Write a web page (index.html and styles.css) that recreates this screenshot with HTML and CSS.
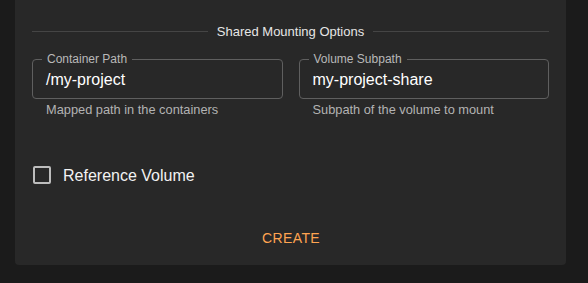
FILE: index.html
```html
<!DOCTYPE html>
<html>
<head>
<meta charset="utf-8">
<link rel="stylesheet" href="styles.css">
</head>
<body>
<div class="card">
  <div class="divider"><span class="divider-text">Shared Mounting Options</span></div>
  <div class="fields">
    <div class="field">
      <div class="outline">
        <span class="label">Container Path</span>
        <span class="value">/my-project</span>
      </div>
      <div class="helper">Mapped path in the containers</div>
    </div>
    <div class="field">
      <div class="outline">
        <span class="label">Volume Subpath</span>
        <span class="value">my-project-share</span>
      </div>
      <div class="helper">Subpath of the volume to mount</div>
    </div>
  </div>
  <label class="check-row">
    <span class="checkbox"></span>
    <span class="check-label">Reference Volume</span>
  </label>
  <div class="actions">
    <button class="btn">Create</button>
  </div>
</div>
</body>
</html>
```
FILE: styles.css
```css
* { box-sizing: border-box; }
body {
  margin: 0;
  background: #1b1b1b;
  font-family: "Liberation Sans", Arial, sans-serif;
  color: #fff;
  width: 588px;
  height: 283px;
  overflow: hidden;
}
.card {
  margin-left: 15px;
  width: 551px;
  background: #282828;
  border-radius: 0 0 4px 4px;
  padding: 21px 17px 9px 17px;
}
.divider {
  display: flex;
  align-items: center;
  height: 20px;
}
.divider::before, .divider::after {
  content: "";
  flex: 1;
  border-top: 1px solid #454545;
}
.divider-text {
  font-size: 13px;
  color: #e6e6e6;
  padding: 0 9px;
}
.fields {
  display: flex;
  gap: 16px;
  margin-top: 18px;
}
.field {
  flex: 1;
}
.outline {
  position: relative;
  height: 40px;
  border: 1px solid #5f5f5f;
  border-radius: 4px;
  display: flex;
  align-items: center;
  padding-left: 13px;
  padding-top: 1px;
}
.label {
  position: absolute;
  top: -8px;
  left: 9px;
  padding: 0 5px;
  background: #282828;
  font-size: 12px;
  line-height: 14px;
  color: #b9b9b9;
}
.value {
  font-size: 16px;
  color: #fff;
}
.helper {
  font-size: 12.8px;
  line-height: 20px;
  color: #b3b3b3;
  padding-left: 14px;
  margin-top: 1px;
}
.check-row {
  display: flex;
  align-items: center;
  margin-top: 46px;
  height: 18px;
}
.checkbox {
  width: 18px;
  height: 18px;
  border: 2px solid #bdbdbd;
  border-radius: 2px;
  margin-left: 1px;
}
.check-label {
  font-size: 16px;
  color: #f2f2f2;
  margin-left: 12px;
  padding-top: 2px;
}
.actions {
  display: flex;
  justify-content: center;
  margin-top: 36px;
}
.btn {
  height: 36px;
  background: none;
  border: none;
  font-family: inherit;
  font-size: 14px;
  font-weight: 400;
  letter-spacing: 0.4px;
  text-transform: uppercase;
  color: #ffa451;
  padding: 0 8px;
  margin-left: 1px;
}
```
